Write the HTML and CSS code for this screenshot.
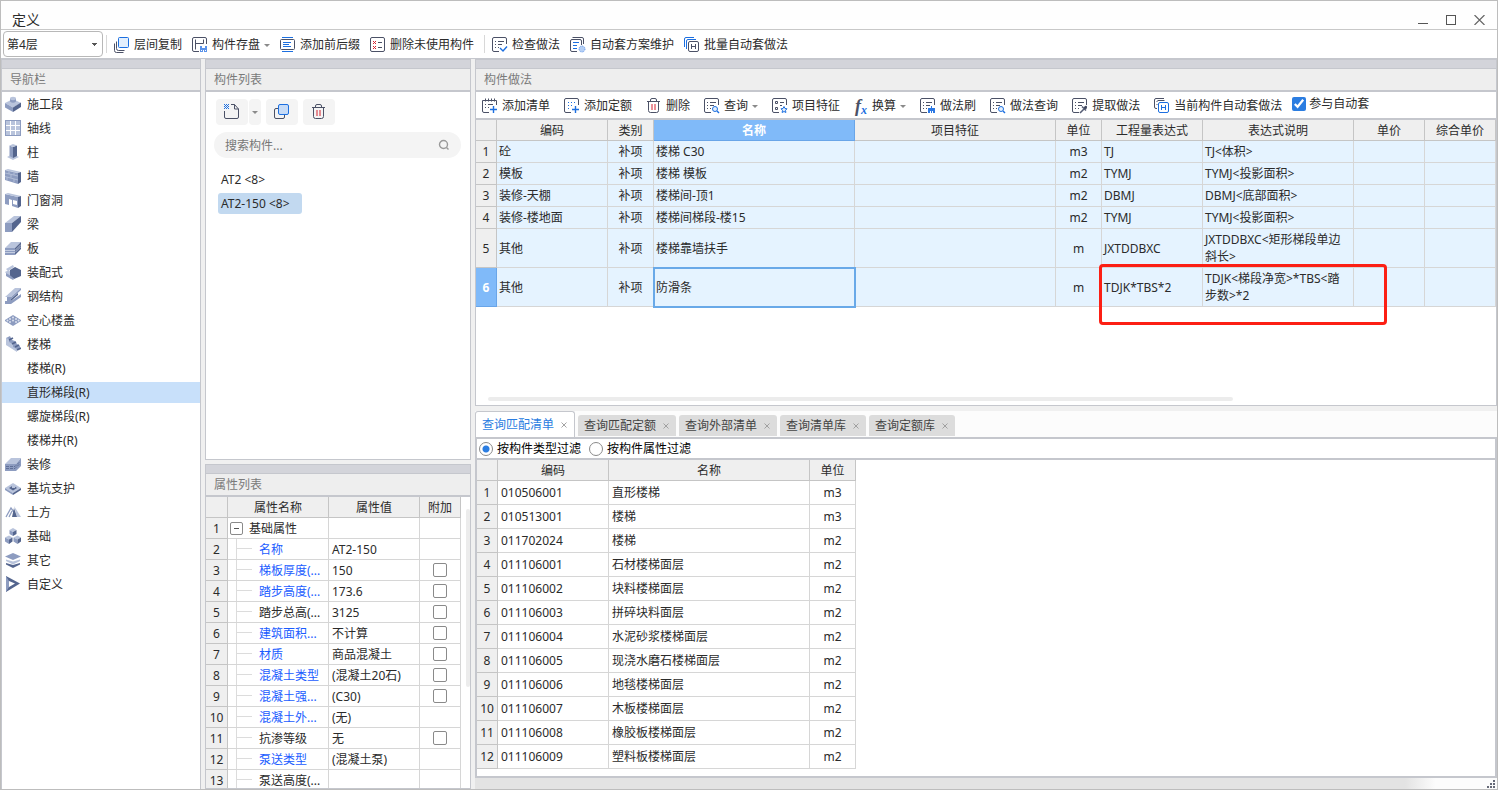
FILE: index.html
```html
<!DOCTYPE html>
<html lang="zh-CN">
<head>
  <meta charset="UTF-8">
  <meta name="viewport" content="width=device-width, initial-scale=1.0">
  <title>定义</title>
  <link rel="stylesheet" href="styles.css">
</head>
<body>

  <!-- icon sprite -->
  <svg class="sprite" aria-hidden="true">
    <!-- toolbar icons -->
    <symbol id="i-floor-copy" viewBox="0 0 16 16"><path class="ln" d="M.5 6.500v7q0 2 2 2h7M2.500 4.500v7q0 2 2 2h6"/><rect class="bl lb" x="4.500" y=".5" width="10" height="10" rx="1"/></symbol>
    <symbol id="i-save" viewBox="0 0 16 16"><path class="ln" d="M7 14.500H2q-1.500 0-1.500-1.500V2Q.5.5 2 .5h11q1.500 0 1.500 1.500v5M3.500 2.500v10M11.500 2.500v4M3.500 6.500h8"/><path fill="#5b93ea" d="M8 9h7v6H8z"/><path fill="#fff" d="M10 9h3v2h-3zM9 13h1v1H9zM11 13h1v2h-1zM13 13h1v1h-1z"/></symbol>
    <symbol id="i-affix" viewBox="0 0 16 16"><path class="bl" d="M2 .5h11M2 14.500h11M3 5.500h8M3 7.500h6M3 9.500h8"/><rect class="ln" x=".5" y="2.500" width="14" height="10" rx="1"/></symbol>
    <symbol id="i-unused" viewBox="0 0 16 16"><rect class="ln" x=".5" y=".5" width="14" height="14" rx="1.500"/><path class="ln" d="M8 5.500h4M8 10.500h4"/><path class="rd" d="M3 4l3 3m0-3L3 7M3 9l3 3m0-3l-3 3"/></symbol>
    <symbol id="i-doc" viewBox="0 0 16 16"><path class="ln" d="M7 14.500H2q-1.500 0-1.500-1.500V2Q.5.5 2 .5h11q1.500 0 1.500 1.500v5M3 4.500h1M6 4.500h6M3 7.500h1M6 7.500h4M3 10.500h1M6 10.500h1"/></symbol>
    <symbol id="i-check" viewBox="0 0 16 16"><use href="#i-doc"/><path class="bl b2" d="M8 11l3 3 4-4.500"/></symbol>
    <symbol id="i-scheme" viewBox="0 0 16 16"><path class="ln" d="M7 14.500H2q-1.500 0-1.500-1.500V4Q.5 2.500 2 2.500h8q1.500 0 1.500 1.500v4M2.500.5h9.500q1.500 0 1.500 1.500v5"/><path class="bl" d="M3 5.500h6M3 8.500h4M3 11.500h4"/><circle cx="12" cy="12" r="3" fill="#b5cff5" stroke="#5b93ea" stroke-dasharray="1 1"/></symbol>
    <symbol id="i-batch" viewBox="0 0 16 16"><path class="bl" d="M.5 10V2Q.5.5 2 .5h8M2.500 12V4q0-1.500 1.500-1.500h8"/><rect class="ln wf" x="4.500" y="4.500" width="10" height="10" rx="1.500"/><path class="ln" d="M7.500 7v5M11.500 7v5M7.500 9.500h4"/></symbol>
    <symbol id="i-add-list" viewBox="0 0 16 16"><path class="ln" d="M7 14.500H2q-1.500 0-1.500-1.500V2.500h14v4.500M3.500.5v3M6.500.5v3M9.500.5v3M12.500.5v3M3 6.500h1M6 6.500h5M3 9.500h1M6 9.500h1"/><path class="bl b2" d="M11.500 8v7M8 11.500h7"/></symbol>
    <symbol id="i-add-norm" viewBox="0 0 16 16"><path class="ln" d="M7 14.500H2q-1.500 0-1.500-1.500V2Q.5.5 2 .5h11q1.500 0 1.500 1.500v5"/><path class="bl" stroke-dasharray="1 2" d="M4 4.500h8M4 7.500h6M4 10.500h3"/><path class="bl b2" d="M11.500 8v7M8 11.500h7"/></symbol>
    <symbol id="i-trash" viewBox="0 0 16 16"><path class="ln" d="M1 3.500h13M4.500 3V2Q4.500.5 6 .5h3q1.500 0 1.500 1.500v1M2.500 4v8.500q0 2 2 2h6q2 0 2-2V4"/><path class="rd" d="M6 6v6M9 6v6"/></symbol>
    <symbol id="i-query" viewBox="0 0 16 16"><use href="#i-doc"/><circle class="bl lb" cx="11" cy="11" r="2.500"/><path class="bl b2" d="M13 13l2 2"/></symbol>
    <symbol id="i-feature" viewBox="0 0 16 16"><path class="ln" d="M7 14.500H2q-1.500 0-1.500-1.500V2Q.5.5 2 .5h11q1.500 0 1.500 1.500v5M3.500 3.500h2v2h-2zM3.500 9.500h2v2h-2zM8 4.500h4M8 7.500h2"/><path class="bl lb" d="M12 8.500l1 2 2 .3-1.500 1.500.4 2.200-1.900-1-1.900 1 .4-2.200L9 10.800l2-.3z"/></symbol>
    <symbol id="i-brush" viewBox="0 0 16 16"><use href="#i-doc"/><path fill="#2b78e4" d="M11 8h1v2h3v2H8v-2h3zM8 12h7v3H8z"/><path stroke="#fff" d="M10.500 13v2M12.500 13v2"/></symbol>
    <symbol id="i-pick" viewBox="0 0 16 16"><use href="#i-doc"/><path d="M8 15l4-4M10 8.500l4 4M12 11l2.500-3" fill="none" stroke="#555d75" stroke-width="1.600"/><circle cx="13.500" cy="9.500" r="1.500" fill="#3f4760"/></symbol>
    <symbol id="i-current" viewBox="0 0 16 16"><path class="ln" d="M3 10.500H2Q.5 10.500.5 9V2Q.5.5 2 .5h8M2.500 3.500h1M2.500 6.500h1"/><rect class="bl wf" x="4.500" y="4.500" width="10" height="10" rx="1.500"/><path class="ln" d="M3.500 2.500h7"/><path class="bl" d="M7.500 7v5M11.500 7v5M7.500 9.500h4"/></symbol>
    <symbol id="i-new" viewBox="0 0 16 16"><path class="ln" d="M.5 7v6q0 1.500 1.500 1.500h11q1.500 0 1.500-1.500V5L10.500.5H7M10.500.5V5h4"/><path stroke="#1c6fe0" stroke-dasharray="1 1" d="M0 .5h5M0 2.500h5M0 4.500h5M1 1.500h4M1 3.500h4"/></symbol>
    <symbol id="i-copy" viewBox="0 0 16 16"><path class="ln" d="M4 4.500H2Q.5 4.500.5 6v7q0 1.500 1.500 1.500h7q1.500 0 1.500-1.500v-2"/><rect x="4.500" y=".5" width="10" height="10" rx="1.500" fill="#c6dbf7" stroke="#1c6fe0"/></symbol>
    <symbol id="i-search" viewBox="0 0 12 12"><circle cx="5.500" cy="5.500" r="4" fill="none" stroke="#999" stroke-width="1.400"/><path d="M8.500 8.500l2 2" stroke="#999" stroke-width="1.400"/></symbol>
    <symbol id="i-close" viewBox="0 0 6 6"><path d="M.5.5l5 5m0-5l-5 5" stroke="currentColor" stroke-width=".9"/></symbol>

    <!-- navigation icons -->
    <symbol id="n-stage" viewBox="0 0 16 16"><path class="c1" d="M0 7l8-4 8 4-8 4.500z"/><path class="c2" d="M0 7l8 4.500V16l-8-4.500z"/><path class="c3" d="M16 6.500l-8 5V16l8-5z"/><path class="c2" d="M5 2.500v3q3 2.500 6 0v-3z"/><ellipse class="c1" cx="8" cy="2.500" rx="3" ry="1.700"/></symbol>
    <symbol id="n-axis" viewBox="0 0 16 16"><path class="c2" d="M0 0h16v16H0z"/><path class="c1" d="M1 1h14v14H1z"/><path stroke="#fff" d="M5.500 1v14M10.500 1v14M1 5.500h14M1 10.500h14"/></symbol>
    <symbol id="n-column" viewBox="0 0 16 16"><path class="c1" d="M2 13l6-3 6 3-6 3z"/><path class="c2" d="M4.500 1.500L8 3v11l-3.500-2z"/><path class="c3" d="M8 3l4-1.500V12l-4 2z"/><path class="c1" d="M4.500 1.500L8 0l4 1.500L8 3z"/></symbol>
    <symbol id="n-wall" viewBox="0 0 16 16"><path class="c2" d="M0 2l13 3v11L0 12z"/><path class="c1" d="M0 2l3-1 13 3-3 1z"/><path class="c3" d="M13 5l3-1v10l-3 2z"/><path stroke="#b9c4dc" stroke-width=".8" d="M0 5l13 3M0 8.500l13 3.500M4 3v3M9 4v3M6 6.500v3M2 9v3M9 11v3"/></symbol>
    <symbol id="n-door" viewBox="0 0 16 16"><path class="c2" fill-rule="evenodd" d="M0 2l13 3v11l-6-2V8L4 7v6l-4-1zM8 8v4l4 1V9z"/><path class="c1" d="M0 2l3-1 13 3-3 1z"/><path class="c3" d="M13 5l3-1v10l-3 2z"/></symbol>
    <symbol id="n-beam" viewBox="0 0 16 16"><path class="c1" d="M0 7l9-7h7L7 7z"/><path class="c2" d="M0 7h7v9H0z"/><path class="c3" d="M7 7l9-7v6l-9 10z"/></symbol>
    <symbol id="n-slab" viewBox="0 0 16 16"><path class="c1" d="M0 8l6-6h10l-6 6z"/><path class="c2" d="M0 8h10v7H0z"/><path class="c3" d="M10 8l6-6v7l-6 6z"/><path d="M0 10.500h10l6-6M0 12.500h10l6-6" fill="none" stroke="#dbe1ee" stroke-width=".7"/></symbol>
    <symbol id="n-prefab" viewBox="0 0 16 16"><path class="c1" d="M1 5l7-4 1 2-6 4zM0 8l4-2 5 7-3 2z"/><path class="c3" d="M5 6l5-3 6 3v6l-7 3-4-3z"/><path class="c2" d="M1 9l5 3 3 3-1 1-7-4z"/></symbol>
    <symbol id="n-steel" viewBox="0 0 16 16"><path class="c1" d="M0 9L10 0h6L6 9z"/><path class="c2" d="M2 9h4L16 0v2L6 11v2H2zM0 13h6l10-7v3L6 16H0z"/><path class="c3" d="M6 11l7-6v2l-7 6z"/></symbol>
    <symbol id="n-hollow" viewBox="0 0 16 16"><path class="c2" d="M0 8l8-5 8 5v1l-8 5-8-5z"/><g fill="#dbe1ee"><circle cx="8" cy="5.500" r="1"/><circle cx="5" cy="7" r="1"/><circle cx="11" cy="7" r="1"/><circle cx="8" cy="8.500" r="1"/><circle cx="2.500" cy="8.500" r="1"/><circle cx="13.500" cy="8.500" r="1"/><circle cx="5" cy="10" r="1"/><circle cx="11" cy="10" r="1"/></g></symbol>
    <symbol id="n-stair" viewBox="0 0 16 16"><path class="c2" d="M1 2l4-2 2 4 3 1 2 3 3 2v3l-3 1L1 8z"/><path class="c1" d="M1 2l3 1v3l4 2v3l4 2v3L1 9z"/><path d="M4 4l4-2M7 8l4-2M10 11l4-2M12 14l4-2" stroke="#54658e" stroke-width="1.800"/></symbol>
    <symbol id="n-finish" viewBox="0 0 16 16"><path class="c1" d="M0 8l6-6h10l-5 6z"/><path class="c2" d="M0 8h11v7H0zM11 8l5-6v8l-5 5z"/><path d="M1 10.500h9l5-5M1 12.500h9l5-5" fill="none" stroke="#54658e" stroke-width=".8" stroke-dasharray="3 1"/></symbol>
    <symbol id="n-pit" viewBox="0 0 16 16"><path class="c1" d="M0 8l8-5 8 5-8 5z"/><path class="c3" d="M4 8l4-2.500L12 8l-4 2.500z"/><path class="c1" d="M7 5h3v3H7z"/><path class="c2" d="M0 8l8 5v2l-8-5z"/><path class="c3" d="M16 8l-8 5v2l8-5z"/></symbol>
    <symbol id="n-earth" viewBox="0 0 16 16"><path d="M1 13l5-9 3 4M4 13l3-6" fill="none" stroke="#8d9cc0" stroke-width="1.300"/><path class="c1" d="M9 2l7 11h-4z"/><path class="c3" d="M9 4l3 9H7z"/></symbol>
    <symbol id="n-base" viewBox="0 0 16 16"><path class="c1" d="M4.500 2L8 0l3.500 2L8 4z"/><path class="c2" d="M4.500 2L8 4v4L4.500 6z"/><path class="c3" d="M11.500 2L8 4v4l3.500-2z"/><path class="c1" d="M0 9.500l4-2 3.500 2-3.500 2zM8.500 9.500l4-2 3.500 2-3.500 2z"/><path class="c2" d="M0 9.500l4 2V16l-4-2.500zM8.500 9.500l4 2V16l-4-2.500z"/><path class="c3" d="M7.500 9.500l-3.500 2V16l3.500-2.500zM16 9.500l-3.500 2V16l3.500-2.500z"/></symbol>
    <symbol id="n-other" viewBox="0 0 16 16"><path class="c3" d="M1 11l7 2 7-2v1.500L8 16l-7-3.500z"/><path class="c1" d="M1 7.500l7 2 7-2V9l-7 3.500L1 9z"/><path class="c2" d="M0 4.500L8 1l8 3.500L8 8z"/></symbol>
    <symbol id="n-custom" viewBox="0 0 16 16"><path class="c3" fill-rule="evenodd" d="M1 0l14 7.500L1 16zM4 5v6l6-3.500z"/><path class="c2" d="M1 0l3 5v6l-3 5z"/></symbol>
  </svg>

  <div class="window">
    <header class="titlebar">
      <h1>定义</h1>
      <div class="win-controls">
        <button aria-label="最小化"><svg width="10" height="10"><path d="M0 8.500h10" stroke="#555"/></svg></button>
        <button aria-label="最大化"><svg width="10" height="10"><rect x=".5" y=".5" width="9" height="9" fill="none" stroke="#555"/></svg></button>
        <button aria-label="关闭"><svg width="11" height="10"><path d="M.5 0l10 10m0-10l-10 10" stroke="#666" stroke-width="1.200"/></svg></button>
      </div>
    </header>

    <div class="toolbar main-toolbar">
      <select class="floor" aria-label="楼层"><option>第4层</option></select>
      <button class="tool split-left"><svg><use href="#i-floor-copy"/></svg>层间复制</button>
      <button class="tool has-menu"><svg><use href="#i-save"/></svg>构件存盘</button>
      <button class="tool"><svg><use href="#i-affix"/></svg>添加前后缀</button>
      <button class="tool"><svg><use href="#i-unused"/></svg>删除未使用构件</button>
      <button class="tool split-left"><svg><use href="#i-check"/></svg>检查做法</button>
      <button class="tool"><svg><use href="#i-scheme"/></svg>自动套方案维护</button>
      <button class="tool"><svg><use href="#i-batch"/></svg>批量自动套做法</button>
    </div>

    <main class="workspace">
      <section class="panel">
        <div class="grip"></div>
        <h2 class="panel-title">导航栏</h2>
        <nav class="nav">
          <button><svg><use href="#n-stage"/></svg>施工段</button>
          <button><svg><use href="#n-axis"/></svg>轴线</button>
          <button><svg><use href="#n-column"/></svg>柱</button>
          <button><svg><use href="#n-wall"/></svg>墙</button>
          <button><svg><use href="#n-door"/></svg>门窗洞</button>
          <button><svg><use href="#n-beam"/></svg>梁</button>
          <button><svg><use href="#n-slab"/></svg>板</button>
          <button><svg><use href="#n-prefab"/></svg>装配式</button>
          <button><svg><use href="#n-steel"/></svg>钢结构</button>
          <button><svg><use href="#n-hollow"/></svg>空心楼盖</button>
          <button><svg><use href="#n-stair"/></svg>楼梯</button>
          <button class="sub">楼梯(R)</button>
          <button class="sub active">直形梯段(R)</button>
          <button class="sub">螺旋梯段(R)</button>
          <button class="sub">楼梯井(R)</button>
          <button><svg><use href="#n-finish"/></svg>装修</button>
          <button><svg><use href="#n-pit"/></svg>基坑支护</button>
          <button><svg><use href="#n-earth"/></svg>土方</button>
          <button><svg><use href="#n-base"/></svg>基础</button>
          <button><svg><use href="#n-other"/></svg>其它</button>
          <button><svg><use href="#n-custom"/></svg>自定义</button>
        </nav>
      </section>

      <div class="middle">
        <section class="panel component-panel">
          <div class="grip"></div>
          <h2 class="panel-title">构件列表</h2>
          <div class="component-tools">
            <div class="split-btn">
              <button aria-label="新建"><svg><use href="#i-new"/></svg></button>
              <button class="menu-btn" aria-label="新建选项"><span class="caret"></span></button>
            </div>
            <button aria-label="复制"><svg><use href="#i-copy"/></svg></button>
            <button aria-label="删除"><svg><use href="#i-trash"/></svg></button>
          </div>
          <label class="search">
            <input type="text" placeholder="搜索构件..." aria-label="搜索构件">
            <svg><use href="#i-search"/></svg>
          </label>
          <ul class="component-list">
            <li>AT2 &lt;8&gt;</li>
            <li class="active">AT2-150 &lt;8&gt;</li>
          </ul>
        </section>

        <section class="panel">
          <div class="grip"></div>
          <h2 class="panel-title">属性列表</h2>
          <div class="props-wrap">
            <table class="grid props">
              <colgroup><col class="w-num"><col class="w-prop"><col class="w-val"><col class="w-add"></colgroup>
              <thead>
                <tr><th></th><th>属性名称</th><th>属性值</th><th>附加</th></tr>
              </thead>
              <tbody>
                <tr><th>1</th><td class="group"><button class="toggle" aria-label="收起"></button>基础属性</td><td></td><td></td></tr>
                <tr><th>2</th><td class="key">名称</td><td>AT2-150</td><td></td></tr>
                <tr><th>3</th><td class="key">梯板厚度(...</td><td>150</td><td><input type="checkbox" aria-label="附加 梯板厚度"></td></tr>
                <tr><th>4</th><td class="key">踏步高度(...</td><td>173.6</td><td><input type="checkbox" aria-label="附加 踏步高度"></td></tr>
                <tr><th>5</th><td class="key plain">踏步总高(...</td><td>3125</td><td><input type="checkbox" aria-label="附加 踏步总高"></td></tr>
                <tr><th>6</th><td class="key">建筑面积...</td><td>不计算</td><td><input type="checkbox" aria-label="附加 建筑面积"></td></tr>
                <tr><th>7</th><td class="key">材质</td><td>商品混凝土</td><td><input type="checkbox" aria-label="附加 材质"></td></tr>
                <tr><th>8</th><td class="key">混凝土类型</td><td>(混凝土20石)</td><td><input type="checkbox" aria-label="附加 混凝土类型"></td></tr>
                <tr><th>9</th><td class="key">混凝土强...</td><td>(C30)</td><td><input type="checkbox" aria-label="附加 混凝土强度"></td></tr>
                <tr><th>10</th><td class="key">混凝土外...</td><td>(无)</td><td></td></tr>
                <tr><th>11</th><td class="key plain">抗渗等级</td><td>无</td><td><input type="checkbox" aria-label="附加 抗渗等级"></td></tr>
                <tr><th>12</th><td class="key">泵送类型</td><td>(混凝土泵)</td><td></td></tr>
                <tr><th>13</th><td class="key plain">泵送高度(...</td><td></td><td></td></tr>
              </tbody>
            </table>
            <div class="v-scroll"></div>
          </div>
        </section>
      </div>

      <div class="right">
        <section class="panel method-panel">
          <div class="grip"></div>
          <h2 class="panel-title">构件做法</h2>
          <div class="toolbar method-toolbar">
            <div class="tools">
              <button class="tool"><svg><use href="#i-add-list"/></svg>添加清单</button>
              <button class="tool"><svg><use href="#i-add-norm"/></svg>添加定额</button>
              <button class="tool"><svg><use href="#i-trash"/></svg>删除</button>
              <button class="tool has-menu"><svg><use href="#i-query"/></svg>查询</button>
              <button class="tool"><svg><use href="#i-feature"/></svg>项目特征</button>
              <button class="tool has-menu"><span class="fx">f<sub>x</sub></span>换算</button>
              <button class="tool"><svg><use href="#i-brush"/></svg>做法刷</button>
              <button class="tool"><svg><use href="#i-query"/></svg>做法查询</button>
              <button class="tool"><svg><use href="#i-pick"/></svg>提取做法</button>
              <button class="tool"><svg><use href="#i-current"/></svg>当前构件自动套做法</button>
            </div>
            <label class="auto"><input type="checkbox" checked>参与自动套</label>
          </div>
          <div class="method-wrap">
            <table class="grid method">
              <colgroup><col class="w-num"><col class="w-code"><col class="w-unit"><col class="w-name"><col class="w-name"><col class="w-unit"><col class="w-expr"><col class="w-desc"><col class="w-price"><col class="w-price"></colgroup>
              <thead>
                <tr><th></th><th>编码</th><th>类别</th><th class="selected">名称</th><th>项目特征</th><th>单位</th><th>工程量表达式</th><th>表达式说明</th><th>单价</th><th>综合单价</th></tr>
              </thead>
              <tbody>
                <tr><th>1</th><td>砼</td><td class="mid">补项</td><td>楼梯 C30</td><td></td><td class="mid">m3</td><td>TJ</td><td>TJ&lt;体积&gt;</td><td></td><td></td></tr>
                <tr><th>2</th><td>模板</td><td class="mid">补项</td><td>楼梯 模板</td><td></td><td class="mid">m2</td><td>TYMJ</td><td>TYMJ&lt;投影面积&gt;</td><td></td><td></td></tr>
                <tr><th>3</th><td>装修-天棚</td><td class="mid">补项</td><td>楼梯间-顶1</td><td></td><td class="mid">m2</td><td>DBMJ</td><td>DBMJ&lt;底部面积&gt;</td><td></td><td></td></tr>
                <tr><th>4</th><td>装修-楼地面</td><td class="mid">补项</td><td>楼梯间梯段-楼15</td><td></td><td class="mid">m2</td><td>TYMJ</td><td>TYMJ&lt;投影面积&gt;</td><td></td><td></td></tr>
                <tr class="tall"><th>5</th><td>其他</td><td class="mid">补项</td><td>楼梯靠墙扶手</td><td></td><td class="mid">m</td><td>JXTDDBXC</td><td>JXTDDBXC&lt;矩形梯段单边<br>斜长&gt;</td><td></td><td></td></tr>
                <tr class="tall"><th class="selected">6</th><td>其他</td><td class="mid">补项</td><td class="current">防滑条</td><td></td><td class="mid">m</td><td>TDJK*TBS*2</td><td>TDJK&lt;梯段净宽&gt;*TBS&lt;踏<br>步数&gt;*2</td><td></td><td></td></tr>
              </tbody>
            </table>
            <div class="highlight"></div>
          </div>
          <div class="h-scroll"></div>
        </section>

        <section class="query">
          <div class="tabs">
            <div class="tab active"><button>查询匹配清单</button><button class="close" aria-label="关闭"><svg><use href="#i-close"/></svg></button></div>
            <div class="tab"><button>查询匹配定额</button><button class="close" aria-label="关闭"><svg><use href="#i-close"/></svg></button></div>
            <div class="tab"><button>查询外部清单</button><button class="close" aria-label="关闭"><svg><use href="#i-close"/></svg></button></div>
            <div class="tab"><button>查询清单库</button><button class="close" aria-label="关闭"><svg><use href="#i-close"/></svg></button></div>
            <div class="tab"><button>查询定额库</button><button class="close" aria-label="关闭"><svg><use href="#i-close"/></svg></button></div>
          </div>
          <div class="query-body">
            <div class="filters">
              <label><input type="radio" name="filter" checked>按构件类型过滤</label>
              <label><input type="radio" name="filter">按构件属性过滤</label>
            </div>
            <table class="grid result">
              <colgroup><col class="w-num"><col class="w-code"><col class="w-name"><col class="w-unit"></colgroup>
              <thead>
                <tr><th></th><th>编码</th><th>名称</th><th>单位</th></tr>
              </thead>
              <tbody>
                <tr><th>1</th><td>010506001</td><td>直形楼梯</td><td class="mid">m3</td></tr>
                <tr><th>2</th><td>010513001</td><td>楼梯</td><td class="mid">m3</td></tr>
                <tr><th>3</th><td>011702024</td><td>楼梯</td><td class="mid">m2</td></tr>
                <tr><th>4</th><td>011106001</td><td>石材楼梯面层</td><td class="mid">m2</td></tr>
                <tr><th>5</th><td>011106002</td><td>块料楼梯面层</td><td class="mid">m2</td></tr>
                <tr><th>6</th><td>011106003</td><td>拼碎块料面层</td><td class="mid">m2</td></tr>
                <tr><th>7</th><td>011106004</td><td>水泥砂浆楼梯面层</td><td class="mid">m2</td></tr>
                <tr><th>8</th><td>011106005</td><td>现浇水磨石楼梯面层</td><td class="mid">m2</td></tr>
                <tr><th>9</th><td>011106006</td><td>地毯楼梯面层</td><td class="mid">m2</td></tr>
                <tr><th>10</th><td>011106007</td><td>木板楼梯面层</td><td class="mid">m2</td></tr>
                <tr><th>11</th><td>011106008</td><td>橡胶板楼梯面层</td><td class="mid">m2</td></tr>
                <tr><th>12</th><td>011106009</td><td>塑料板楼梯面层</td><td class="mid">m2</td></tr>
              </tbody>
            </table>
          </div>
        </section>

        <footer class="statusbar">
          <svg width="8" height="8"><path fill="#666a78" d="M6 0h2v2H6zM3 3h2v2H3zM6 3h2v2H6zM0 6h2v2H0zM3 6h2v2H3zM6 6h2v2H6z"/></svg>
        </footer>
      </div>
    </main>
  </div>

</body>
</html>
```

FILE: styles.css
```css
* {
  margin: 0;
  padding: 0;
  box-sizing: border-box;
}

body, button, input, select {
  font-family: "Noto Sans", "Noto Sans CJK SC", sans-serif;
  font-size: 12px;
  line-height: 17px;
  color: #2b2b2b;
}

button {
  background: none;
  border: none;
  white-space: nowrap;
  cursor: pointer;
}

ul {
  list-style: none;
}

.sprite {
  display: none;
}

/* icon strokes and fills */
.ln { fill: none; stroke: #4b5166; }
.bl { fill: none; stroke: #1c6fe0; }
.rd { fill: none; stroke: #d6202e; }
.b2 { stroke-width: 1.4; }
.lb { fill: #e3effd; }
.wf { fill: #fff; }
.c1 { fill: #b9c4dc; }
.c2 { fill: #8d9cc0; }
.c3 { fill: #54658e; }

.window {
  display: flex;
  flex-direction: column;
  height: 100vh;
  border: 1px solid #bdbdbd;
  background: #f0f0f0;
  overflow: hidden;
}

/* title bar */
.titlebar {
  display: flex;
  justify-content: space-between;
  align-items: center;
  height: 29px;
  padding: 9px 12px 0 11px;
  background: #fefefe;
  border-bottom: 1px solid #c8c8c8;
}

.titlebar h1 {
  font-size: 14px;
  font-weight: normal;
  line-height: 19px;
}

.win-controls {
  display: flex;
  gap: 18px;
}

.win-controls button,
.win-controls svg {
  display: block;
}

/* toolbars */
.toolbar {
  display: flex;
  align-items: center;
  background: #fff;
}

.main-toolbar {
  gap: 10px;
  height: 29px;
  padding-left: 2px;
  border-bottom: 1px solid #c5c7cd;
}

.tool {
  display: flex;
  align-items: center;
  gap: 4px;
  height: 18px;
  padding-top: 2px;
  line-height: 16px;
}

.tool svg {
  width: 16px;
  height: 16px;
}

.split-left {
  padding-left: 7px;
  border-left: 1px solid #d8d8d8;
}

.floor + .split-left {
  margin-left: -7px;
}

.has-menu::after,
.caret {
  content: "";
  width: 0;
  border: 3px solid transparent;
  border-top-color: #8a8a8a;
  border-bottom: none;
}

.floor {
  width: 100px;
  height: 26px;
  padding: 0 3px;
  border: 1px solid #b8b8b8;
  border-radius: 4px;
  appearance: none;
  background: conic-gradient(from 315deg at 50% 100%, #555 90deg, transparent 0) right 5px center / 6px 3px no-repeat;
}

/* panels */
.workspace {
  flex: 1;
  min-height: 0;
  display: grid;
  grid-template-columns: 200px 266px minmax(0, 1fr);
  grid-template-rows: minmax(0, 1fr);
  gap: 4px;
}

.panel {
  display: flex;
  flex-direction: column;
  min-height: 0;
  background: #fff;
  border: 1px solid #c5c7cd;
  border-width: 0 1px;
  overflow: hidden;
}

.grip {
  flex: none;
  height: 10px;
  background: #d3d4da;
  border: 1px solid #c5c7cd;
  border-width: 1px 0;
}

.panel-title {
  flex: none;
  height: 23px;
  padding-left: 8px;
  font-size: 12px;
  font-weight: normal;
  line-height: 21px;
  color: #7a7a7a;
  background: #eee;
  border-bottom: 2px solid #c5c7cd;
}

.nav {
  display: flex;
  flex-direction: column;
  gap: 3px;
  padding-top: 2px;
}

.nav button {
  display: flex;
  align-items: center;
  gap: 6px;
  height: 21px;
  padding-left: 3px;
}

.nav svg {
  width: 16px;
  height: 16px;
  margin-bottom: 1px;
}

.nav .sub {
  padding-left: 25px;
}

.nav .active {
  background: #c8e0fa;
}

.middle {
  display: grid;
  grid-template-rows: minmax(0, 401fr) minmax(0, 325fr);
  gap: 4px;
}

.component-panel {
  border-bottom-width: 1px;
}

.component-tools {
  display: flex;
  gap: 5px;
  padding: 7px 10px;
}

.component-tools button {
  display: grid;
  place-items: center;
  width: 32px;
  height: 26px;
  background: #f4f4f4;
  border-radius: 4px;
}

.component-tools svg {
  width: 16px;
  height: 16px;
}

.split-btn {
  display: flex;
  gap: 1px;
}

.component-tools .menu-btn {
  width: 12px;
}

.search {
  display: flex;
  align-items: center;
  height: 26px;
  margin: 0 9px 0 8px;
  padding: 0 11px;
  background: #f4f4f4;
  border-radius: 13px;
}

.search input {
  flex: 1;
  min-width: 0;
  background: none;
  border: none;
  outline: none;
}

.search input::placeholder {
  color: #777;
}

.search svg {
  width: 12px;
  height: 12px;
}

.component-list {
  display: flex;
  flex-direction: column;
  align-items: flex-start;
  gap: 3px;
  padding: 11px 12px;
}

.component-list li {
  padding: 2px 12px 2px 3px;
  border-radius: 3px;
}

.component-list .active {
  background: #c2d9f0;
}

/* tables */
.grid {
  table-layout: fixed;
  width: 0;
  border-collapse: separate;
  border-spacing: 0;
}

.grid th,
.grid td {
  height: 21px;
  padding: 0 2px;
  border: 1px solid #d6d6d6;
  border-width: 0 1px 1px 0;
  line-height: 17px;
}

.grid th {
  font-weight: normal;
  background: #efefef;
  border-color: #c5c5c5;
}

.grid td {
  text-align: left;
}

.grid .mid {
  text-align: center;
}

.w-num { width: 21px; }
.w-code { width: 111px; }
.w-unit { width: 46px; }
.w-name { width: 201px; }
.w-expr { width: 101px; }
.w-desc { width: 151px; }
.w-price { width: 71px; }
.w-prop { width: 101px; }
.w-val { width: 91px; }
.w-add { width: 41px; }

.grid tbody th {
  padding: 0;
}

/* property list */
.props-wrap {
  display: flex;
  justify-content: space-between;
  flex: 1;
  min-height: 0;
  border-bottom: 1px solid #c5c7cd;
  overflow: hidden;
}

.props .w-num {
  width: 22px;
}

.props td {
  padding-left: 3px;
}

.props td:last-child {
  padding: 0 1px 0 0;
}

.props .key {
  padding-left: 31px;
  color: #1a5cff;
  white-space: nowrap;
  background: linear-gradient(#dcdcdc, #dcdcdc) 8px 0 / 1px 100% no-repeat,
    linear-gradient(#dcdcdc, #dcdcdc) 8px 9px / 16px 1px no-repeat;
}

.props .plain {
  color: #2b2b2b;
}

.props .group {
  padding-left: 2px;
}

.toggle {
  width: 13px;
  height: 13px;
  margin-right: 6px;
  vertical-align: -1px;
  border: 1px solid #8a8a8a;
  border-radius: 2px;
  background: linear-gradient(#555, #555) center / 5px 1px no-repeat;
}

.props input {
  display: block;
  width: 14px;
  height: 14px;
  margin: 0 auto;
  appearance: none;
  border: 1px solid #8a8a8a;
  border-radius: 2px;
  background: #fff;
}

.v-scroll {
  width: 4px;
  height: 178px;
  margin: 12px 0 0;
  border-radius: 2px;
  background: #ececec;
}

/* component methods */
.right {
  display: flex;
  flex-direction: column;
  min-height: 0;
}

.method-panel {
  flex: 346 1 0;
  border-bottom-width: 1px;
}

.method-toolbar {
  flex: none;
  gap: 10px;
  height: 28px;
  padding-left: 6px;
  border-bottom: 2px solid #c5c7cd;
}

.tools {
  display: flex;
  align-items: center;
  gap: 14px;
}

.fx {
  width: 14px;
  font: italic bold 18px/16px "Liberation Serif", serif;
  color: #4b5166;
}

.fx sub {
  font-size: 12px;
  line-height: 0;
  vertical-align: -2px;
  color: #1c6fe0;
}

.auto {
  display: flex;
  align-items: center;
  gap: 3px;
  height: 18px;
  padding-bottom: 2px;
  line-height: 16px;
}

.auto input {
  width: 14px;
  height: 14px;
  accent-color: #2b7de1;
}

.method-wrap {
  position: relative;
  flex: 1;
}

.method td {
  height: 22px;
  background: #e5f3ff;
}

.method .tall td {
  height: 39px;
  white-space: nowrap;
}

.grid .selected {
  font-weight: bold;
  color: #fff;
  background: #80baf9;
  border-color: #69a5e8;
}

.method .current {
  outline: 2px solid #69a9e8;
  outline-offset: -1px;
}

/* mark drawn over the last expression */
.highlight {
  position: absolute;
  left: 623px;
  top: 144px;
  width: 288px;
  height: 61px;
  border: 3px solid #fc1f14;
  border-radius: 4px;
}

.h-scroll {
  width: 73%;
  height: 4px;
  margin: 0 12px 4px;
  border-radius: 2px;
  background: #ececec;
}

/* query area */
.query {
  flex: 367 1 0;
  display: flex;
  flex-direction: column;
  min-height: 0;
  margin-top: 5px;
}

.tabs {
  display: flex;
  align-items: flex-end;
  gap: 3px;
  height: 26px;
  background: #fcfcfc;
}

.tab {
  display: flex;
  align-items: center;
  gap: 7px;
  height: 21px;
  margin-bottom: 1px;
  padding: 0 7px 0 6px;
  background: #dcdcdc;
  border-radius: 3px 3px 0 0;
}

.tab button {
  color: #444;
}

.tab .close {
  color: #999;
}

.tab svg {
  display: block;
  width: 6px;
  height: 6px;
}

.tab.active {
  height: 26px;
  margin-bottom: 0;
  background: #fff;
  border: 1px solid #c5c7cd;
  border-bottom: none;
}

.tab.active button:first-child {
  color: #2b7de1;
}

.query-body {
  flex: 1;
  min-height: 0;
  background: #fff;
  border: 2px solid #c5c7cd;
  overflow: hidden;
}

.filters {
  display: flex;
  gap: 8px;
  height: 21px;
  padding-left: 2px;
  border-bottom: 2px solid #c5c7cd;
}

.filters label {
  display: flex;
  align-items: center;
  gap: 4px;
  color: #000;
}

.filters input {
  width: 14px;
  height: 14px;
  appearance: none;
  border: 1px solid #8a8a8a;
  border-radius: 50%;
  background: #fff;
}

.filters input:checked {
  background: radial-gradient(circle, #2b7de1 3px, #fff 4px);
}

.result td {
  height: 24px;
  padding-left: 3px;
}

.result .mid {
  padding: 0 2px;
}

.statusbar {
  display: flex;
  justify-content: flex-end;
  align-items: center;
  height: 11px;
  padding-right: 2px;
  background: linear-gradient(to right, #e3e3e3 91%, #fcfcfc 94%);
}
```
